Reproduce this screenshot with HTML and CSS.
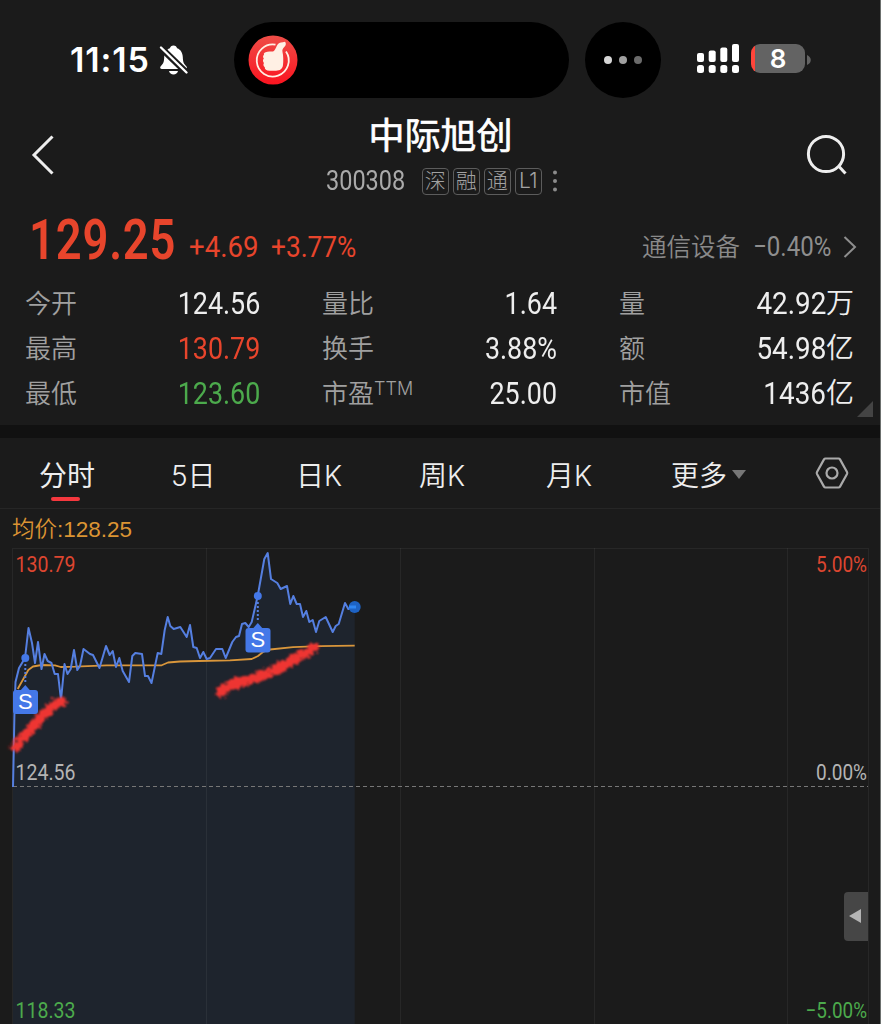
FILE: index.html
```
<!DOCTYPE html>
<html lang="zh-CN">
<head>
    <meta charset="utf-8">
    <title>中际旭创 300308</title>
    <link rel="stylesheet" href="styles.css">
</head>
<body>
<div class="screen">

    <div class="status">
        <span class="clock">11:15</span>
        <svg class="bell" width="30" height="32" viewBox="0 0 30 32">
            <path fill="#fff" d="M14.500 1.500c-2 0-3.200 1.200-3.600 2.700C7 5.600 5.400 9 5.200 13c-.2 5-.7 6.500-3.500 9.300C.7 23.600 1 25 3 25h23c2 0 2.500-1.400 1.300-2.700-2.800-2.800-3.300-4.300-3.500-9.300-.2-4-1.800-7.400-5.700-8.800-.4-1.500-1.600-2.700-3.600-2.700zM10 27h9c-.5 2.300-2.300 3.500-4.500 3.500S10.500 29.300 10 27z"/>
            <path stroke="#1b1b1b" stroke-width="6.500" d="M0 2l29 28"/>
            <path stroke="#fff" stroke-width="2.400" stroke-linecap="round" d="M2 3.500l25.500 25"/>
        </svg>
        <div class="island">
            <svg width="50" height="50" viewBox="0 0 50 50">
                <defs>
                    <linearGradient id="appred" x1="0" y1="0" x2="0" y2="1">
                        <stop offset="0" stop-color="#ee4d47"/>
                        <stop offset="1" stop-color="#fb1420"/>
                    </linearGradient>
                </defs>
                <circle cx="25" cy="25" r="24.500" fill="url(#appred)"/>
                <path fill="none" stroke="#fff0e4" stroke-width="1.800" d="M27.500 9.700A16 16 0 1 0 38 16.500"/>
                <path fill="#fff0e4" d="M17.500 17.300C20 16 22.500 16.800 25 16.400C27.500 15.500 28 11.500 30 9C31.500 7.200 34 7.500 37 6.700C38.500 8.500 37.800 10.300 36.500 11.800C34.800 13.500 34 15 34.500 17C35.300 20 35.500 26 35 30C34.500 34 32 35.600 28 35.700L21.500 35.700C18.500 35.700 16.500 34.500 16.800 32.200C15.300 31.300 15 29.300 16 28C14.700 26.800 14.700 24.800 15.800 23.600C14.700 22 14.900 20.800 16 19.800C15.500 18.500 16.200 17.700 17.500 17.300Z"/>
            </svg>
        </div>
        <div class="bubble"><i></i><i></i><i></i></div>
        <svg class="signal" width="43" height="30" viewBox="0 0 43 30" fill="#fff">
            <rect x="0" y="9" width="7" height="9" rx="2"/>
            <rect x="11.700" y="6.500" width="7" height="11.500" rx="2"/>
            <rect x="23.300" y="3.500" width="7" height="14.500" rx="2"/>
            <rect x="35" y="0" width="7" height="18" rx="2"/>
            <rect x="0" y="21" width="7" height="8" rx="2.500"/>
            <rect x="11.700" y="21" width="7" height="8" rx="2.500"/>
            <rect x="23.300" y="21" width="7" height="8" rx="2.500"/>
            <rect x="35" y="21" width="7" height="8" rx="2.500"/>
        </svg>
        <div class="battery">8</div>
        <svg class="nub" width="4" height="10" viewBox="0 0 4 10"><path fill="#636363" d="M0 0c5 2 5 8 0 10z"/></svg>
    </div>

    <div class="header">
        <svg class="back" width="24" height="42" viewBox="0 0 24 42"><path d="M21.500 2.500L3 21l18.500 18.500"/></svg>
        <div class="title">
            <h1>中际旭创</h1>
            <div class="code">
                <span class="digits">300308</span>
                <span class="tag">深</span>
                <span class="tag">融</span>
                <span class="tag">通</span>
                <span class="tag">L1</span>
                <svg width="6" height="24" viewBox="0 0 6 24">
                    <circle cx="3" cy="3.500" r="2"/><circle cx="3" cy="12" r="2"/><circle cx="3" cy="20.500" r="2"/>
                </svg>
            </div>
        </div>
        <svg class="search" width="42" height="42" viewBox="0 0 42 42"><circle cx="20" cy="20" r="17.600"/><path d="M33 32.500l6.500 7"/></svg>
    </div>

    <div class="quote">
        <span class="price">129.25</span>
        <span class="change">+4.69</span>
        <span class="percent">+3.77%</span>
        <span class="sector">通信设备</span>
        <span class="sector-change">−0.40%</span>
        <svg class="more" width="14" height="22" viewBox="0 0 14 22"><path d="M1.500 1L12 11 1.500 21"/></svg>
    </div>

    <div class="stats">
        <label>今开</label><span class="val">124.56</span>
        <label>量比</label><span class="val">1.64</span>
        <label>量</label><span class="val unit"><b>42.92</b>万</span>

        <label>最高</label><span class="val up">130.79</span>
        <label>换手</label><span class="val">3.88%</span>
        <label>额</label><span class="val unit"><b>54.98</b>亿</span>

        <label>最低</label><span class="val down">123.60</span>
        <label>市盈<sup>TTM</sup></label><span class="val">25.00</span>
        <label>市值</label><span class="val unit"><b>1436</b>亿</span>
        <i class="corner"></i>
    </div>

    <div class="tabs">
        <span class="tab active">分时</span>
        <span class="tab">5日</span>
        <span class="tab">日K</span>
        <span class="tab">周K</span>
        <span class="tab">月K</span>
        <span class="tab">更多<i class="caret"></i></span>
        <svg class="settings" width="34" height="32" viewBox="0 0 34 32">
            <path d="M10.500 1.500h13q1 0 1.500.9L32 15q.5 1 0 2l-7 12.600q-.5.900-1.500.900h-13q-1 0-1.500-.900L2 17q-.5-1 0-2L9 2.400q.5-.9 1.500-.9z"/>
            <circle cx="17" cy="16" r="5.500"/>
        </svg>
    </div>

    <div class="average">均价:128.25</div>

    <div class="chart">
        <svg width="880" height="478" viewBox="0 546 880 478">
            <defs>
                <!-- frays the edge of the marker strokes -->
                <filter id="brush" x="-20%" y="-20%" width="140%" height="140%">
                    <feTurbulence type="fractalNoise" baseFrequency="0.3" numOctaves="2" seed="4" result="n"/>
                    <feDisplacementMap in="SourceGraphic" in2="n" scale="10" xChannelSelector="R" yChannelSelector="G"/>
                    <feGaussianBlur stdDeviation="0.8"/>
                </filter>
            </defs>
            <path class="area" d=""/>
            <path class="grid" d="M12.500 1024V548.500H868.500V1024M206.500 548V1024M400.500 548V1024M594.500 548V1024M787.500 548V1024"/>
            <path class="zero" d="M13 786.500H868"/>
            <polyline class="avg" points="17.700,689 23.300,679 28.300,670 33,666.500 41.700,665 55,665.300 60.700,667 75,666.700 106.700,665.300 161.700,665.300 168,662.500 180,661.500 199,661 230,660.300 251.700,659 258,656 263,652 270,649.500 293,647.200 320,646.200 354.700,645.700"/>
            <polyline class="line" points="13,787 13.700,753 14.500,710 15.500,682 19,668 25,658 28.500,628 32,643 35,663 38,642 41.500,669 44.500,654 47.700,661 51.500,663 54.700,674 58,674 61,700 64.500,664 67.500,674 70.700,669 74,650 77.300,670 80,666 83.500,649 90,654 93,655 99.500,668 106,646 109.700,655 112.700,651 116,667 119.300,658 122.700,671 129,682 132.300,656 135.300,653 142,654 145,676 148,676 151.500,683 157.700,653 161.300,654 164.700,630 167.700,617 170.300,626 173.700,629 180.300,627 186.700,637 190,625 193.300,647 196.700,648 200,658 203.300,652 206.700,659 210,658 216,649 222.300,649 225.700,658 232.300,642 236,637 239,636 242,624 245.300,623 248.700,627 251.700,622 257.700,596 264.300,559 267.700,553 271,579 277.300,583 280.700,589 287,586 290.300,604 293.300,596 296.700,604 300,604 303,617 306.300,611 309.300,622 312.700,620 316,632 319.300,621 325.700,617 332.700,632 335.700,626 338.700,624 345,603 348.300,609 354.700,607"/>
            <g class="brush" filter="url(#brush)">
                <path d="M16 747L21 740Q33 726 43 715L54 705L62 702"/>
                <path d="M221 692Q229 684 240 682Q260 678 279 668Q297 658 314 648"/>
            </g>
            <circle cx="354.700" cy="607" r="6" fill="#1e63c4"/>
            <path stroke="#2f86f2" stroke-width="3" d="M349 607h7"/>
            <g class="mark">
                <circle cx="25.300" cy="658" r="4"/>
                <path class="dots" d="M25.300 664V684"/>
                <path d="M20 691l5.300-6 5.300 6z"/>
                <rect x="13" y="690" width="25" height="24" rx="3"/>
                <text x="25.300" y="709">S</text>
            </g>
            <g class="mark">
                <circle cx="257.800" cy="596" r="4"/>
                <path class="dots" d="M257.800 602V621"/>
                <path d="M252.500 629l5.300-6 5.300 6z"/>
                <rect x="245.500" y="628" width="25" height="24.500" rx="3"/>
                <text x="257.800" y="647">S</text>
            </g>
            <g class="axis">
                <text class="up" x="15.500" y="572" textLength="60" lengthAdjust="spacingAndGlyphs">130.79</text>
                <text x="15.500" y="780" textLength="60" lengthAdjust="spacingAndGlyphs">124.56</text>
                <text class="down" x="15.500" y="1018" textLength="60" lengthAdjust="spacingAndGlyphs">118.33</text>
                <text class="up" x="816" y="572" textLength="51" lengthAdjust="spacingAndGlyphs">5.00%</text>
                <text x="816" y="780" textLength="51" lengthAdjust="spacingAndGlyphs">0.00%</text>
                <text class="down" x="805.500" y="1018" textLength="61.500" lengthAdjust="spacingAndGlyphs">−5.00%</text>
            </g>
        </svg>
        <div class="drawer"></div>
    </div>

</div>
<script>
// The shaded area follows the price line down to the bottom of the chart.
var line = document.querySelector('.line').getAttribute('points');
document.querySelector('.area').setAttribute('d', 'M' + line + ' 354.7,1024 13,1024Z');
</script>
</body>
</html>
```
FILE: styles.css
```
* {
    box-sizing: border-box;
}

body {
    margin: 0;
    background: #1b1b1b;
    color: #eee;
    font-family: "Liberation Sans", "Noto Sans CJK SC", sans-serif;
}

.screen {
    width: 881px;
    height: 1024px;
    overflow: hidden;
    border-right: 1px solid #6c706e;
}

svg {
    display: block;
    flex: none;
}

/* status bar */
.status {
    display: flex;
    align-items: center;
    height: 98px;
    padding: 22px 0 0 70px;
}

.clock {
    width: 89px;
    margin-top: -2px;
    font: 600 34px Inter, sans-serif;
    letter-spacing: 0.9px;
    color: #fff;
}

.island {
    display: flex;
    align-items: center;
    width: 335px;
    height: 76px;
    margin-left: 45px;
    padding-left: 14px;
    border-radius: 38px;
    background: #000;
}

.bubble {
    display: flex;
    align-items: center;
    justify-content: center;
    gap: 7px;
    width: 76px;
    height: 76px;
    margin-left: 16px;
    border-radius: 50%;
    background: #000;
}

.bubble i {
    width: 8px;
    height: 8px;
    border-radius: 50%;
    background: #d6d6d6;
}

.bubble i:nth-child(2) {
    background: #a0a0a0;
}

.bubble i:nth-child(3) {
    background: #6b6b6b;
}

.signal {
    margin: -2px 0 0 36px;
}

.battery {
    width: 54px;
    height: 29px;
    margin: -3px 2px 0 11px;
    border-radius: 9px;
    background: linear-gradient(90deg, #ff453a 4px, #636363 4px);
    color: #fff;
    font: 600 26px/29px Inter, sans-serif;
    text-align: center;
}

/* title */
.header {
    display: flex;
    justify-content: space-between;
    height: 104px;
    padding: 0 32px 0 31px;
}

.header svg {
    fill: none;
    stroke: #eee;
    stroke-width: 3;
}

.header .back,
.header .search {
    margin-top: 36px;
}

.title {
    padding-left: 8px;
}

.title h1 {
    margin: 13px 0 0 12px;
    font-size: 36px;
    line-height: 52px;
    font-weight: 400;
    -webkit-text-stroke: 0.7px #fff;
    color: #fff;
    text-align: center;
}

.code {
    display: flex;
    align-items: center;
    gap: 4px;
    margin-top: 4px;
    padding-left: 14px;
    height: 28px;
}

.code .digits {
    width: 92px;
    font: 27px Roboto, sans-serif;
    color: #aaa;
    transform: scaleX(.87);
    transform-origin: left;
}

.tag {
    width: 27px;
    height: 27px;
    border: 1px solid #5c5c5c;
    border-radius: 4px;
    font-family: Inter, "Noto Sans CJK SC", sans-serif;
    font-size: 21px;
    line-height: 24px;
    font-weight: 300;
    letter-spacing: -0.5px;
    color: #a2a2a2;
    text-align: center;
}

.header .code svg {
    margin-left: 6px;
    fill: #8c8c8c;
    stroke: none;
}

/* price line */
.quote {
    display: flex;
    align-items: baseline;
    height: 78px;
    padding-left: 29px;
    font-family: Roboto, "Noto Sans CJK SC", sans-serif;
    color: #e8452c;
    white-space: nowrap;
}

.quote span {
    transform-origin: left;
}

.price {
    width: 160px;
    font-size: 56px;
    line-height: 77px;
    font-weight: 600;
    letter-spacing: 1px;
    transform: scaleX(.81);
}

.change {
    width: 82px;
    font-size: 30px;
    transform: translateY(-2px) scaleX(.92);
}

.percent {
    width: 371px;
    font-size: 30px;
    transform: translateY(-2px) scaleX(.875);
}

.sector {
    width: 111px;
    font-size: 24.500px;
    font-weight: 350;
    color: #8a8a8a;
    transform: translateY(-3px);
}

.sector-change {
    width: 90px;
    font-size: 28px;
    color: #8e8e8e;
    transform: translateY(-3px) scaleX(.86);
}

.more {
    align-self: flex-start;
    margin-top: 34px;
    fill: none;
    stroke: #8e8e8e;
    stroke-width: 2;
}

/* quote table */
.stats {
    position: relative;
    display: grid;
    grid-template-columns: repeat(3, 137px 160px);
    grid-auto-rows: 45px;
    height: 145px;
    padding-left: 25px;
    line-height: 45px;
}

.stats label {
    padding-top: 2px;
    font-size: 26px;
    font-weight: 350;
    color: #a0a0a0;
    white-space: nowrap;
}

.stats sup {
    font: 300 18px/0 Inter, sans-serif;
    vertical-align: 8px;
}

.val {
    width: 98px;
    font: 32px/47px Roboto, "Noto Sans CJK SC", sans-serif;
    text-align: right;
    white-space: nowrap;
    transform: scaleX(.84);
    transform-origin: right;
}

.unit {
    transform: none;
    display: flex;
    justify-content: flex-end;
    font-size: 28px;
    font-weight: 350;
}

.unit b {
    font-size: 32px;
    font-weight: 400;
    transform: scaleX(.87);
    transform-origin: right;
}

.up {
    color: #e8452c;
    fill: #dd4630;
}

.down {
    color: #4caa4c;
    fill: #4caa4c;
}

.corner {
    position: absolute;
    right: 7px;
    bottom: 8px;
    width: 16px;
    height: 16px;
    background: #444;
    clip-path: polygon(100% 0, 100% 100%, 0 100%);
}

/* period tabs */
.tabs {
    display: grid;
    grid-template-columns: 132px 125px 123px 127px 125px 144px 34px;
    align-items: center;
    height: 84px;
    padding-left: 39px;
    border-top: 13px solid #111;
    border-bottom: 1px solid #262626;
    font-family: Inter, "Noto Sans CJK SC", sans-serif;
    font-size: 28px;
    font-weight: 350;
    white-space: nowrap;
}

.tab {
    padding-top: 1px;
}

.tab.active {
    position: relative;
    font-weight: 400;
}

.tab.active::after {
    content: "";
    position: absolute;
    left: 12px;
    bottom: -7px;
    width: 29px;
    height: 4px;
    border-radius: 2px;
    background: #f5383e;
}

.caret {
    display: inline-block;
    margin-left: 5px;
    vertical-align: 7px;
    border: 7.500px solid transparent;
    border-top: 9px solid #777;
    border-bottom: 0;
}

.settings {
    fill: none;
    stroke: #aaa;
    stroke-width: 2.200;
}

.average {
    height: 37px;
    padding-left: 12px;
    font-size: 22.500px;
    line-height: 41px;
    font-weight: 350;
    color: #dc9433;
}

/* chart */
.chart {
    position: relative;
}

.area {
    fill: #1e242d;
}

.grid {
    fill: none;
    stroke: #fff;
    stroke-opacity: .055;
}

.zero {
    stroke: #777;
    stroke-dasharray: 4 3;
}

.avg,
.line {
    fill: none;
    stroke: #d9963b;
    stroke-width: 1.800;
    stroke-linejoin: round;
}

.line {
    stroke: #557fe0;
    stroke-width: 2;
}

.brush {
    fill: none;
    stroke: #ee3430;
    stroke-width: 10;
    stroke-linecap: round;
}

.mark {
    fill: #4478e8;
}

.mark .dots {
    stroke: #557fe0;
    stroke-width: 2;
    stroke-dasharray: 2 2;
}

.mark text {
    fill: #fff;
    font-size: 22px;
    text-anchor: middle;
}

.axis {
    font: 22.500px Roboto, sans-serif;
    fill: #b4b4b4;
}

.drawer {
    position: absolute;
    left: 844px;
    top: 346px;
    width: 24px;
    height: 49px;
    border-radius: 4px 0 0 4px;
    background: #464646;
}

.drawer::after {
    content: "";
    position: absolute;
    left: 5px;
    top: 17px;
    border: 7.500px solid transparent;
    border-right: 12px solid #b4b4b4;
    border-left: 0;
}
```
